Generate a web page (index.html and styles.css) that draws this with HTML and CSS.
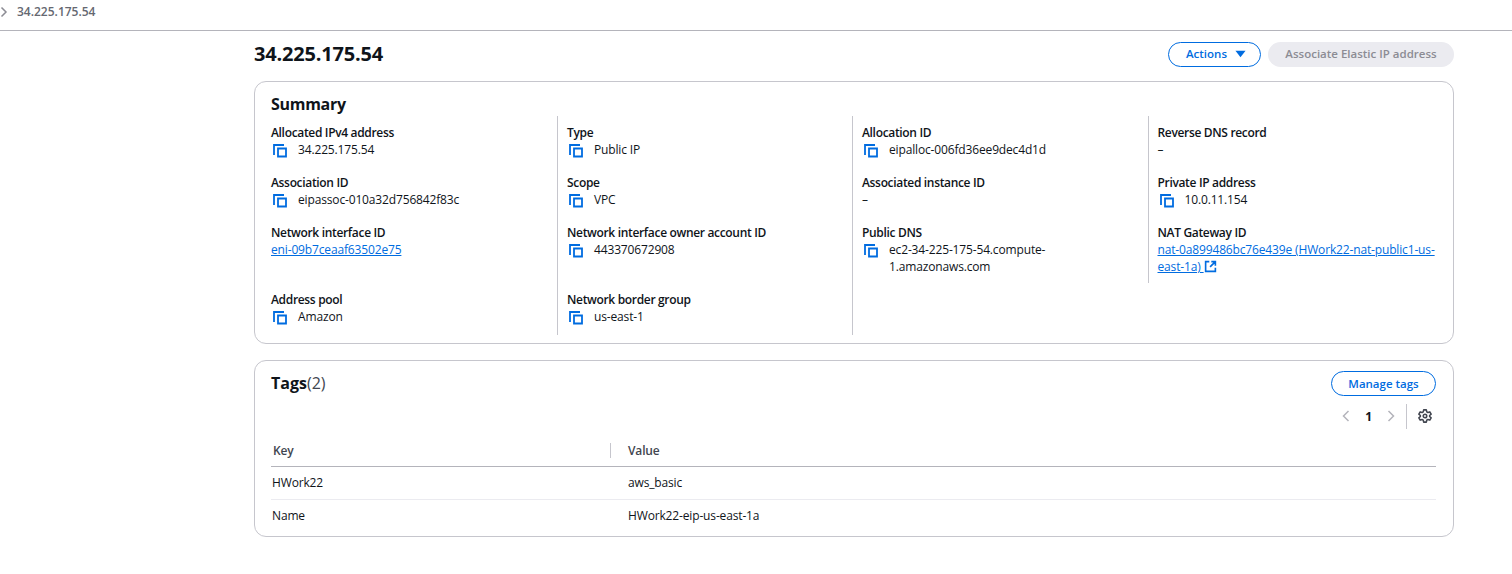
FILE: index.html
```html
<!DOCTYPE html>
<html lang="en">
<head>
<meta charset="utf-8">
<title>34.225.175.54</title>
<link rel="stylesheet" href="styles.css">
</head>
<body>
<svg class="defs" width="0" height="0" aria-hidden="true">
  <symbol id="copy" viewBox="0 0 14 14"><path d="M1 11V1h10" fill="none" stroke="currentColor" stroke-width="1.800"/><path d="M5 4.500h8v8H5z" fill="none" stroke="currentColor" stroke-width="1.800"/></symbol>
</svg>
<nav class="crumb">
  <svg class="crumb-chev" viewBox="0 0 8 12" width="8" height="12"><path d="M1.500 1.500 6 6l-4.500 4.500" fill="none" stroke="currentColor" stroke-width="1.500"/></svg>
  <span class="crumb-text">34.225.175.54</span>
</nav>
<main class="page">
  <header class="head">
    <h1 class="title">34.225.175.54</h1>
    <div class="head-actions">
      <button class="btn btn-normal btn-actions">Actions <svg class="caret" viewBox="0 0 12 8" width="11" height="8"><path d="M0.500 0.500h11L6 7.500z" fill="currentColor"/></svg></button>
      <button class="btn btn-disabled">Associate Elastic IP address</button>
    </div>
  </header>

  <section class="card summary">
    <h2 class="card-title">Summary</h2>
    <div class="grid">
      <div class="cell"><div class="label">Allocated IPv4 address</div><div class="value copy"><svg class="ico"><use href="#copy"/></svg><span>34.225.175.54</span></div></div>
      <div class="cell"><div class="label">Type</div><div class="value copy"><svg class="ico"><use href="#copy"/></svg><span>Public IP</span></div></div>
      <div class="cell"><div class="label">Allocation ID</div><div class="value copy"><svg class="ico"><use href="#copy"/></svg><span>eipalloc-006fd36ee9dec4d1d</span></div></div>
      <div class="cell"><div class="label">Reverse DNS record</div><div class="value">–</div></div>

      <div class="cell"><div class="label">Association ID</div><div class="value copy"><svg class="ico"><use href="#copy"/></svg><span>eipassoc-010a32d756842f83c</span></div></div>
      <div class="cell"><div class="label">Scope</div><div class="value copy"><svg class="ico"><use href="#copy"/></svg><span>VPC</span></div></div>
      <div class="cell"><div class="label">Associated instance ID</div><div class="value">–</div></div>
      <div class="cell"><div class="label">Private IP address</div><div class="value copy"><svg class="ico"><use href="#copy"/></svg><span>10.0.11.154</span></div></div>

      <div class="cell"><div class="label">Network interface ID</div><div class="value"><a class="link" href="#">eni-09b7ceaaf63502e75</a></div></div>
      <div class="cell"><div class="label">Network interface owner account ID</div><div class="value copy"><svg class="ico"><use href="#copy"/></svg><span>443370672908</span></div></div>
      <div class="cell"><div class="label">Public DNS</div><div class="value copy"><svg class="ico"><use href="#copy"/></svg><span>ec2-34-225-175-54.compute-<br>1.amazonaws.com</span></div></div>
      <div class="cell"><div class="label">NAT Gateway ID</div><div class="value"><a class="link" href="#">nat-0a899486bc76e439e (HWork22-nat-public1-us-east-1a) <svg class="ext" viewBox="0 0 16 16" width="13" height="13"><path d="M6.500 2H2v12h12V9.500M9 2h5v5M14 2 7.500 8.500" fill="none" stroke="currentColor" stroke-width="2"/></svg></a></div></div>

      <div class="cell"><div class="label">Address pool</div><div class="value copy"><svg class="ico"><use href="#copy"/></svg><span>Amazon</span></div></div>
      <div class="cell"><div class="label">Network border group</div><div class="value copy"><svg class="ico"><use href="#copy"/></svg><span>us-east-1</span></div></div>
      <div class="cell"></div>
    </div>
  </section>

  <section class="card tags">
    <div class="tags-head">
      <h2 class="card-title tags-title">Tags<span class="count">(2)</span></h2>
      <button class="btn btn-normal btn-manage">Manage tags</button>
    </div>
    <div class="pager">
      <svg class="pg-arrow" viewBox="0 0 8 12" width="8" height="12"><path d="M6.500 1 1.500 6l5 5" fill="none" stroke="currentColor" stroke-width="1.500"/></svg>
      <span class="pg-num">1</span>
      <svg class="pg-arrow" viewBox="0 0 8 12" width="8" height="12"><path d="M1.500 1l5 5-5 5" fill="none" stroke="currentColor" stroke-width="1.500"/></svg>
      <span class="pg-sep"></span>
      <svg class="gear" viewBox="0 0 16 16" width="14" height="14"><path d="M6.500 1h3l.5 2.200 1.300.8 2.200-.7 1.500 2.600-1.700 1.500v1.200l1.700 1.500-1.500 2.600-2.200-.7-1.300.8-.5 2.200h-3L6 12.800l-1.300-.8-2.200.7L1 10.100l1.700-1.500V7.400L1 5.900l1.500-2.600 2.200.7L6 3.200z" fill="none" stroke="currentColor" stroke-width="1.800" stroke-linejoin="round"/><circle cx="8" cy="8" r="2" fill="none" stroke="currentColor" stroke-width="1.800"/></svg>
    </div>
    <table class="table">
      <thead>
        <tr><th class="col-key"><span class="th-in">Key</span></th><th class="col-val"><span class="th-in th-div">Value</span></th></tr>
      </thead>
      <tbody>
        <tr><td>HWork22</td><td class="td-val">aws_basic</td></tr>
        <tr><td>Name</td><td class="td-val">HWork22-eip-us-east-1a</td></tr>
      </tbody>
    </table>
  </section>
</main>
</body>
</html>
```
FILE: styles.css
```css
* { box-sizing: border-box; }
html, body { margin: 0; padding: 0; background: #fff; }
body { font-family: "Open Sans", "Noto Sans", sans-serif; font-size: 12px; letter-spacing: -0.15px; line-height: 17px; color: #0f141a; height: 574px; overflow: hidden; }
.defs { position: absolute; }
.crumb { height: 31px; border-bottom: 1px solid #b4b4bb; display: flex; align-items: flex-start; padding-top: 6px; }
.crumb-chev { color: #8c8c94; }
.crumb-text { margin-left: 9px; font-weight: 600; font-size: 12px; letter-spacing: 0; line-height: 12px; color: #656871; }
.page { width: 1200px; margin-left: 254px; }
.head { display: flex; justify-content: space-between; align-items: center; padding-bottom: 4px; height: 50px; }
.title { margin: 0; font-size: 20px; line-height: 24px; font-weight: 700; letter-spacing: -0.2px; }
.head-actions { display: flex; gap: 7px; }
.btn { font-family: inherit; font-size: 11.5px; letter-spacing: 0; font-weight: 600; line-height: 15px; height: 25px; border-radius: 13px; padding: 0 17px 1px; background: #fff; display: flex; align-items: center; white-space: nowrap; }
.btn-normal { border: 1px solid #006ce0; color: #006ce0; }
.btn-actions { gap: 8px; width: 93px; padding: 0 0 1px 17px; }
.btn-disabled { border: 0; background: #ebebf0; color: #8c8c94; width: 186px; justify-content: center; padding: 0 0 1px; }
.caret { margin-top: 1px; flex: none; }
.card { border: 1px solid #c6c6cd; border-radius: 12px; background: #fff; padding: 0 17px 0 16px; }
.summary { height: 263px; }
.card-title { margin: 0; font-size: 16px; line-height: 20px; font-weight: 700; letter-spacing: -0.3px; }
.summary .card-title { padding-top: 12px; }
.tags-title { letter-spacing: 0; padding-bottom: 2px; }
.count { font-weight: 400; color: #424650; }
.grid { display: grid; grid-template-columns: 286px 295px 295.5px 1fr; grid-template-rows: 50px 50px 67px 52px; margin-top: 2px; }
.cell { border-left: 1px solid #c6c6cd; padding: 8px 0 0 9px; }
.cell:nth-child(4n+1) { border-left: 0; padding-left: 0; }
.label { font-weight: 600; font-size: 12px; letter-spacing: -0.33px; line-height: 17px; }
.value { line-height: 17px; }
.value.copy { display: flex; align-items: flex-start; }
.ico { width: 14px; height: 14px; color: #006ce0; flex: none; margin: 3px 11px 0 2px; }
.link { color: #006ce0; text-decoration: underline; }
.ext { vertical-align: -2px; }
.tags { margin-top: 16px; height: 177px; }
.tags-head { display: flex; justify-content: space-between; align-items: center; padding-top: 10px; }
.btn-manage { width: 105px; justify-content: center; padding: 0 0 1px; }
.pager { display: flex; justify-content: flex-end; align-items: center; height: 26px; margin-top: 7px; }
.pg-arrow { color: #b4b4bb; }
.pg-num { font-weight: 700; color: #0f141a; margin: 0 15px; }
.pg-sep { width: 1px; height: 25px; background: #c6c6cd; margin: 0 11px; }
.gear { color: #424650; margin-right: 4px; }
.table { width: 100%; border-collapse: collapse; table-layout: fixed; margin-top: 4px; }
.col-key { width: 339px; }
.table th { text-align: left; font-weight: 600; color: #424650; padding: 2px 0 0; border-bottom: 1px solid #b4b4bb; height: 33px; }
.th-in { display: block; padding-left: 2px; line-height: 15px; }
.th-div { border-left: 1px solid #c6c6cd; padding-left: 17px; }
.table td { padding: 0 0 0 1px; height: 33px; border-bottom: 1px solid #ebebf0; }
.table tr:last-child td { border-bottom: 0; height: 32px; }
.table .td-val { padding-left: 18px; }
```
